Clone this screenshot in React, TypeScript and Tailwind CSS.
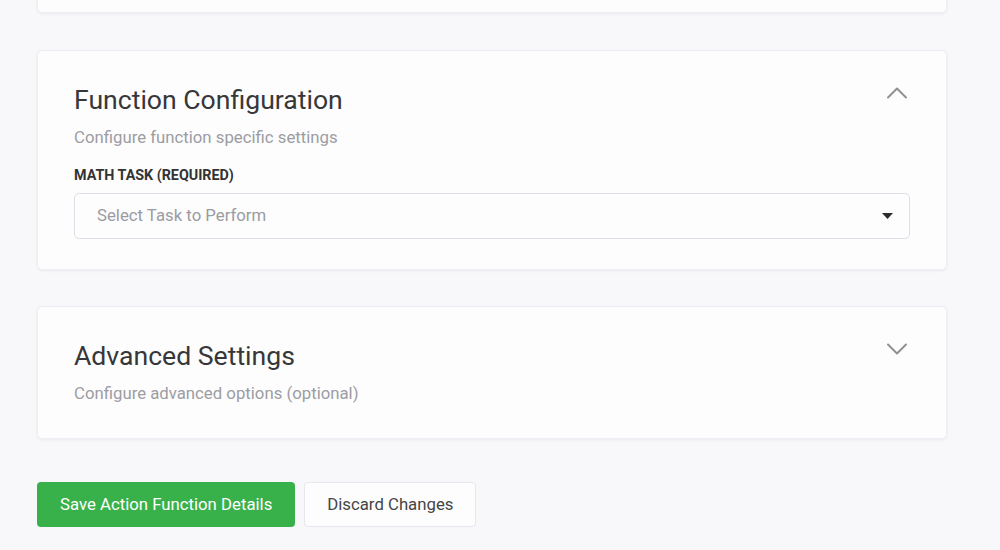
import { ChevronUp, ChevronDown } from "lucide-react";

const Card = ({ title, subtitle, open, children }: { title: string; subtitle: string; open?: boolean; children?: React.ReactNode }) => {
    return (
        <div className={"rounded-[5px] border border-[#eeeef4] bg-[#fdfdfd] px-[36px] pt-[33px] shadow-[0_1px_3px_rgba(20,20,60,0.06)] " + (open ? "pb-[30px]" : "pb-[33px]")}>
            <div className="flex items-start justify-between">
                <div>
                    <h2 className="text-[26.6px] leading-[32px] font-normal text-[#37373a]">{title}</h2>
                    <p className="mt-[9px] text-[16.75px] leading-[24px] text-[#9c9ca3]">{subtitle}</p>
                </div>
                <button className="mt-[-9px] mr-[-5px] text-[#8f8f94]">
                    {open ? <ChevronUp size={36} strokeWidth={1.3} /> : <ChevronDown size={36} strokeWidth={1.3} />}
                </button>
            </div>
            {children}
        </div>
    )
}

export default function App() {
    return (
        <div className="min-h-[550px] w-full bg-[#f8f8fa] pl-[37px] overflow-hidden" style={{ fontFamily: "Roboto, 'Liberation Sans', sans-serif" }}>
            <div className="w-[910px]">
                {/* previous card, mostly scrolled off */}
                <div className="mt-[-87px] h-[100px] rounded-[5px] border border-[#eeeef4] bg-[#fdfdfd] shadow-[0_1px_3px_rgba(20,20,60,0.06)]"></div>

                <div className="mt-[37px]">
                    <Card title="Function Configuration" subtitle="Configure function specific settings" open>
                        <label className="mt-[17px] block text-[14.3px] leading-[18px] font-bold text-[#333]">MATH TASK (REQUIRED)</label>
                        <div className="mt-[9px] flex h-[46px] items-center justify-between rounded-[5px] border border-[#dedee6] bg-[#fdfdfd] pl-[22px] pr-[16px]">
                            <span className="text-[16.75px] text-[#9b9ba2]">Select Task to Perform</span>
                            <svg width="11" height="6" viewBox="0 0 11 6"><path d="M0 0h11L5.5 6z" fill="#2b2b2b" /></svg>
                        </div>
                    </Card>
                </div>

                <div className="mt-[36px]">
                    <Card title="Advanced Settings" subtitle="Configure advanced options (optional)" />
                </div>

                <div className="mt-[43px] flex gap-[9px]">
                    <button className="h-[45px] rounded-[4px] bg-[#38b14a] px-[23px] text-[16.75px] text-white">Save Action Function Details</button>
                    <button className="h-[45px] rounded-[4px] border border-[#e6e6ee] bg-[#fdfdfd] px-[22px] text-[16.75px] text-[#454545]">Discard Changes</button>
                </div>
            </div>
        </div>
    )
}
